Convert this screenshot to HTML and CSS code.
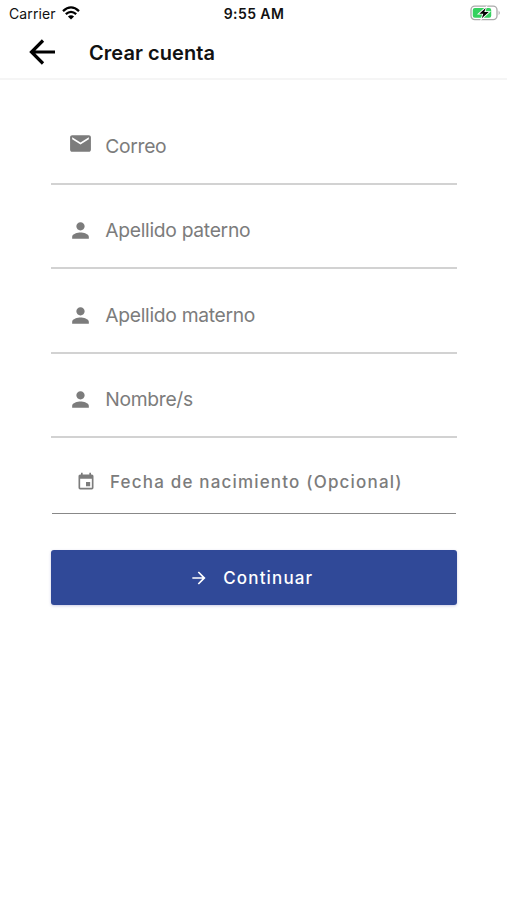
FILE: index.html
```html
<!DOCTYPE html>
<html lang="es">
<head>
<meta charset="utf-8">
<meta name="viewport" content="width=device-width, initial-scale=1">
<title>Crear cuenta</title>
<link rel="stylesheet" href="styles.css">
</head>
<body>
<div class="status">
  <div class="network"><span class="carrier">Carrier</span>
    <svg class="wifi" viewBox="0 0 18 14"><path d="M1 5.1Q9-2.4 17 5.1M3.8 8.2Q9 3.5 14.2 8.2" fill="none" stroke="#000" stroke-width="2.3"/><path d="M5.9 10.4Q9 7.9 12.1 10.4L9 13.6Z"/></svg>
  </div>
  <time class="clock">9:55 AM</time>
  <svg class="battery" viewBox="0 0 31 16"><rect x="1" y="1.2" width="26" height="13.4" rx="3.8" fill="#fff" stroke="#aaa" stroke-width="1.3"/><path d="M28.6 5.5q2.4 2.4 0 4.8z" fill="#aaa"/><rect x="2.8" y="3" width="18.4" height="9.8" rx="2" fill="#35d15f"/><path d="M15.7 3 9.3 8.7h4l-1.5 4.6 6.9-6.2h-4.4z" fill="#000" stroke="#fff" stroke-width="1.8" paint-order="stroke"/></svg>
</div>
<header class="header">
  <svg class="back" viewBox="0 0 28 28"><path d="M27 14H4M15 2.5 3.5 14 15 25.5" fill="none" stroke="#000" stroke-width="3.2"/></svg>
  <h1 class="title">Crear cuenta</h1>
</header>
<main class="form">
  <div class="field field-mail">
    <svg class="icon" viewBox="0 0 24 24"><path d="M20 4H4c-1.1 0-2 .9-2 2v12c0 1.1.9 2 2 2h16c1.1 0 2-.9 2-2V6c0-1.1-.9-2-2-2zm0 4-8 5-8-5V6l8 5 8-5z"/></svg>
    <span class="label">Correo</span>
  </div>
  <div class="field">
    <svg class="icon" viewBox="0 0 24 24"><path d="M12 12c2.21 0 4-1.79 4-4s-1.79-4-4-4-4 1.79-4 4 1.79 4 4 4zm0 2c-2.67 0-8 1.34-8 4v2h16v-2c0-2.66-5.33-4-8-4z"/></svg>
    <span class="label">Apellido paterno</span>
  </div>
  <div class="field">
    <svg class="icon" viewBox="0 0 24 24"><path d="M12 12c2.21 0 4-1.79 4-4s-1.79-4-4-4-4 1.79-4 4 1.79 4 4 4zm0 2c-2.67 0-8 1.34-8 4v2h16v-2c0-2.66-5.33-4-8-4z"/></svg>
    <span class="label">Apellido materno</span>
  </div>
  <div class="field">
    <svg class="icon" viewBox="0 0 24 24"><path d="M12 12c2.21 0 4-1.79 4-4s-1.79-4-4-4-4 1.79-4 4 1.79 4 4 4zm0 2c-2.67 0-8 1.34-8 4v2h16v-2c0-2.66-5.33-4-8-4z"/></svg>
    <span class="label">Nombre/s</span>
  </div>
  <div class="date">
    <svg class="date-icon" viewBox="0 0 24 24"><path d="M19 19H5V8h14M16 1v2H8V1H6v2H5c-1.11 0-2 .89-2 2v14a2 2 0 0 0 2 2h14a2 2 0 0 0 2-2V5c0-1.11-.9-2-2-2h-1V1m-1 11h-5v5h5z"/></svg>
    <span class="date-label">Fecha de nacimiento (Opcional)</span>
  </div>
  <button class="submit" type="button">
    <svg class="submit-icon" viewBox="0 0 24 24"><path d="M4 11v2h12l-5.5 5.5 1.42 1.42L19.84 12l-7.92-7.92L10.5 5.5 16 11z"/></svg>
    <span>Continuar</span>
  </button>
</main>
</body>
</html>
```
FILE: styles.css
```css
* { box-sizing: border-box; }
body { margin: 0; min-height: 900px; background: #fff; font-family: Inter, "Liberation Sans", sans-serif; color: #111; }
svg { display: block; flex: none; }
.status { height: 28px; padding: 0 6px 0 7px; display: grid; grid-template-columns: 1fr auto 1fr; align-items: center; }
.network { display: flex; align-items: center; gap: 6px; padding-left: 2px; }
.carrier { font-size: 14px; letter-spacing: .1px; line-height: 28px; }
.wifi { width: 18px; height: 14px; margin-top: -2px; }
.clock { font-size: 14px; font-weight: 600; line-height: 28px; letter-spacing: .4px; }
.battery { width: 31px; height: 16px; justify-self: end; margin-top: -2px; }
.header { height: 52px; padding: 0 28px; display: flex; align-items: center; border-bottom: 2px solid #f5f5f5; }
.back { width: 28px; height: 28px; margin-top: -2px; }
.title { margin: 0 0 0 33px; font-size: 20px; font-weight: 600; line-height: 28px; letter-spacing: .05px; }
.form { padding: 20.7px 50.5px 0 51px; }
.field { height: 84.33px; padding: 8.4px 0 0 17px; display: flex; align-items: center; border-bottom: 2px solid #d2d2d2; color: #7c7c7c; }
.icon { width: 25px; height: 25px; margin-top: 1px; fill: #7c7c7c; }
.field-mail .icon { margin-top: -6px; }
.label { margin-left: 12.2px; font-size: 19.3px; line-height: 28px; letter-spacing: -.3px; }
.date { height: 76px; margin: 0 1px; padding: 12px 0 0 24px; display: flex; align-items: center; border-bottom: 1.5px solid #888; color: #7c7c7c; }
.date-icon { width: 20px; height: 20px; fill: #7c7c7c; }
.date-label { margin-left: 14px; font-size: 17px; font-weight: 500; letter-spacing: 1.18px; white-space: nowrap; }
.submit { width: 100%; height: 55px; margin: 36.3px 0 0; padding: 0 5px 0 0; display: flex; align-items: center; justify-content: center; gap: 14px; border: 0; border-radius: 3px; background: #304998; box-shadow: 0 1px 3px #6868b055; color: #fff; font: 500 17px Inter, "Liberation Sans", sans-serif; letter-spacing: 1.15px; }
.submit-icon { width: 20px; height: 20px; fill: #fff; }
```
